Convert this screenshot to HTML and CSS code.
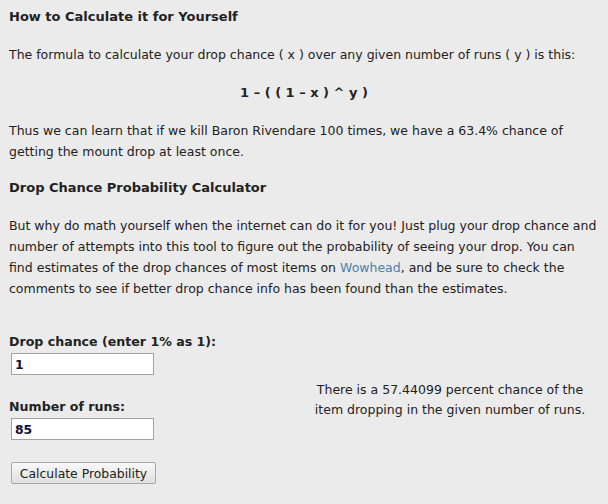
FILE: index.html
```html
<!DOCTYPE html>
<html>
<head>
<meta charset="utf-8">
<link rel="stylesheet" href="styles.css">
</head>
<body>
<div class="page">
  <h3 class="heading">How to Calculate it for Yourself</h3>
  <p>The formula to calculate your drop chance ( x ) over any given number of runs ( y ) is this:</p>
  <p class="formula">1 &ndash; ( ( 1 &ndash; x ) ^ y )</p>
  <p class="tight">Thus we can learn that if we kill Baron Rivendare 100 times, we have a 63.4% chance of getting the mount drop at least once.</p>
  <h3 class="heading">Drop Chance Probability Calculator</h3>
  <p>But why do math yourself when the internet can do it for you! Just plug your drop chance and number of attempts into this tool to figure out the probability of seeing your drop. You can find estimates of the drop chances of most items on <a href="#" class="link">Wowhead</a>, and be sure to check the comments to see if better drop chance info has been found than the estimates.</p>
  <div class="calc">
    <div class="form">
      <label class="label">Drop chance (enter 1% as 1):</label>
      <input class="field" type="text" value="1">
      <label class="label">Number of runs:</label>
      <input class="field" type="text" value="85">
      <button class="btn" type="button">Calculate Probability</button>
    </div>
    <div class="result">There is a 57.44099 percent chance of the item dropping in the given number of runs.</div>
  </div>
</div>
</body>
</html>
```
FILE: styles.css
```css
html, body {
  margin: 0;
  padding: 0;
  background: #ebebeb;
}
.page {
  padding: 6px 9px;
  font-family: "DejaVu Sans", Verdana, sans-serif;
  font-size: 12.5px;
  line-height: 21px;
  color: #222;
}
.heading {
  font-size: 13px;
  font-weight: bold;
  margin: 0 0 17px;
}
p {
  margin: 0 0 17px;
}
p.tight {
  margin-bottom: 15px;
}
.formula {
  text-align: center;
  font-weight: bold;
  font-size: 13px;
}
.link {
  color: #4a7fa8;
  text-decoration: none;
}
.calc {
  display: flex;
  margin-top: 32px;
}
.form {
  width: 300px;
  display: flex;
  flex-direction: column;
  align-items: flex-start;
}
.label {
  font-size: 12.6px;
  font-weight: bold;
  line-height: 21px;
}
.field {
  box-sizing: border-box;
  width: 143px;
  height: 22px;
  margin: 1px 0 21px 2px;
  border: 1px solid #a3a3a3;
  background: #fff;
  font-family: "DejaVu Sans", sans-serif;
  font-weight: bold;
  font-size: 12.4px;
  color: #111133;
  padding: 0 3px;
}
.btn {
  box-sizing: border-box;
  height: 22px;
  width: 145px;
  font-family: "DejaVu Sans", sans-serif;
  font-size: 12.4px;
  margin: 1px 0 0 2px;
  padding: 0;
  border: 1px solid #a8a8a8;
  border-radius: 2px;
  background: linear-gradient(#f8f8f8, #e0e0e0);
  color: #222;
}
.result {
  flex: 1;
  text-align: center;
  align-self: center;
  line-height: 20px;
  padding-right: 8px;
  margin-bottom: 16px;
}
```
